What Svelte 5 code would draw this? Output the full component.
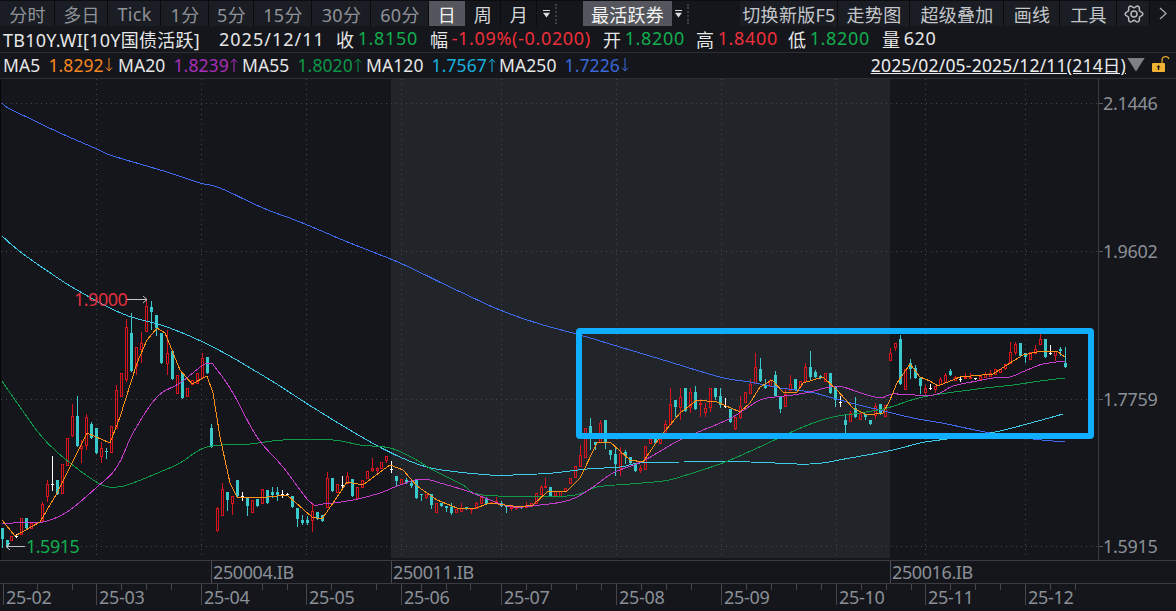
<script>
  const leftTabs = [['分时',55],['多日',53],['Tick',53],['1分',48],['5分',45],['15分',58],['30分',59],['60分',58]];
  const rightTabs = [['切换新版F5',98],['走势图',72],['超级叠加',94],['画线',56],['工具',57]];

  const info = [
    [['TB10Y.WI[10Y国债活跃]','t tight']],
    [['2025/12/11','t wide']],
    [['收','t'],['1.8150','g']],
    [['幅','t'],['-1.09%(-0.0200)','r']],
    [['开','t'],['1.8200','g']],
    [['高','t'],['1.8400','r']],
    [['低','t'],['1.8200','g']],
    [['量','t'],['620','t']]
  ];
  const mas = [
    ['MA5','1.8292',false,'orange'],['MA20','1.8239',true,'purple'],['MA55','1.8020',true,'green'],
    ['MA120','1.7567',true,'cyan'],['MA250','1.7226',false,'blue']
  ];

  const seg3 = [
    ['c',7,715,748,715,770],['c',20,750,770],['r',33,738,750],['w',48,737,733,741],['r',63,685,733],['c',78,685,715],['r',93,700,715],['r',108,695,700],
    ['r',125,642,690,635,695],['r',140,583,617,570,635],['w',155,583,498,600],['c',170,570,612],['r',185,522,610],['r',200,445,525],
    ['r',215,378,436,342,440],['c',230,378,468,318,468],['r',244,468,475,450,520],['r',259,380,465,372,480],['c',274,402,445,395,445],
    ['c',289,415,488],['r',304,475,497,455,520],['c',319,483,487,475,503],['r',334,408,485],['r',349,300,415,285,415],['r',364,250,318],
    ['r',379,112,268,88,275],['c',394,130,243,70,243],['r',409,172,228,172,255],['r',424,160,178,125,218],['r',439,47,122,30,122],
    ['c',454,50,65,33,118],['c',469,75,115,75,135],['c',484,130,218],['r',500,188,218,120,255],['c',515,183,267],['r',530,255,310],
    ['c',545,248,323],['r',560,295,318,295,322],['r',575,270,283],['r',590,250,280],['r',605,205,260,190,260],['c',620,200,250],
    ['c',634,415,472,402,472],['r',650,655,720,652,725],['r',665,598,675,580,675],['c',680,605,630,605,660],['r',695,618,640,618,675],
    ['c',710,570,618],['w',725,618,607,630],['c',740,620,648,620,675],['r',755,630,665],['c',770,628,648],['r',785,597,640],['c',800,600,640],
    ['c',815,605,615,592,620],['c',830,605,615,592,630],['w',845,612,600,622],['w',860,612,610,614],['c',875,618,652],['c',890,655,687,655,707],
    ['c',905,690,700,675,702],['c',920,690,700,678,702],['r',935,663,690,640,725],['c',950,665,688],['c',965,675,692],['r',980,565,650,545,650],
    ['c',995,563,603],['r',1010,583,605],['w',1025,585,558,592],['r',1040,558,580,545,580],['c',1055,568,618],['r',1070,592,625],['r',1085,570,592],
    ['r',1100,542,565],['r',1115,535,540,505,545],['r',1130,535,540,530,552]
  ];
  const seg4 = [
    ['r',4,187,205],['r',19,167,180,167,190],['w',34,208,183,215],['c',49,228,242,228,258],['r',64,237,252],['c',79,240,250,235,250],['c',94,250,258,240,262],
    ['c',109,240,293],['c',124,282,285,282,300],['r',139,282,292,282,298],['c',154,283,315,283,325],['r',169,310,335],['c',184,310,318],
    ['c',199,318,325,318,333],['c',214,322,340,308,342],['r',229,328,335],['r',244,323,333,310,333],['c',259,320,328],['r',274,325,328,325,342],
    ['r',289,310,323,305,323],['r',304,290,310,285,310],['c',319,295,313,290,313],['r',334,305,308],['r',349,302,308,292,308],['c',364,308,318,302,318],
    ['c',379,318,322,318,335],['r',394,320,325,320,333],['r',409,320,325,320,330],['c',424,318,325],['r',439,315,320,305,320],['r',454,310,318],
    ['r',469,278,310],['r',484,262,282,255,282],['r',496,258,262,235,262],['c',511,262,288],['r',526,272,285],['r',541,272,288],['r',556,265,272],
    ['r',571,235,250],['r',586,198,232],['r',601,165,198,135,198],['r',616,85,170],['c',631,78,110,55,148],['c',646,125,135,125,148],
    ['r',661,68,125,60,125],['c',676,60,130,60,145],['c',691,150,165,150,178],['c',706,162,192,145,225],['r',721,158,205,140,228],
    ['c',736,155,168,150,188],['c',751,170,190],['c',766,193,213],['r',781,203,210,195,218],['r',796,138,208],['r',811,118,130],['c',826,118,130,98,130],['r',841,118,130]
  ];
  const seg5 = [
    ['r',16,313,345,300,345],['r',31,252,312,205,312],['c',46,240,262,240,288],['r',61,230,262,205,300],['c',76,205,272],['r',91,217,262,205,278],
    ['c',106,215,268,197,268],['r',121,250,252,238,292],['r',136,264,275,250,290],['r',151,205,262,205,275],['c',166,205,230,205,238],
    ['c',181,228,255,205,262],['w',196,258,235,262],['c',211,268,305],['r',226,290,325,290,330],['r',241,258,292,228,298],['r',256,217,245],
    ['r',271,192,220,178,222],['r',286,142,190,98,190],['c',301,147,183,115,183],['c',316,195,203,178,203],['r',331,180,198,178,198],
    ['c',346,165,228,153,228],['c',361,228,268,228,275],['r',376,222,257,205,257],['r',391,193,210,165,210],['c',406,178,210],['r',421,183,197,183,205],
    ['r',436,142,182,128,182],['c',451,140,172,93,178],['c',466,155,170,150,170],['c',481,168,175,165,175],['r',496,160,182],['c',511,158,220],
    ['c',526,202,240,202,258],['w',541,245,228,258],['c',556,300,315,285,335],['r',571,278,303,272,303],['c',586,265,292,232,292],['r',601,280,297,272,297],
    ['c',616,282,290,282,297],['c',631,300,312],['r',646,258,285,250,297],['c',661,252,283],['r',676,255,288,255,292]
  ];
  const seg6 = [
    ['r',31,98,120,85,120],['r',46,70,80,70,92],['c',61,58,192,45,192],['r',76,148,208],['c',91,130,147,118,175],['c',106,145,175,135,175],
    ['c',121,173,197,173,218],['r',136,205,215,195,222],['w',151,204,193,208],['r',166,198,208,198,220],['r',181,177,192,170,192],['r',196,165,185,160,185],
    ['c',211,152,165,148,165],['r',226,170,180,167,180],['w',241,178,172,182],['r',256,170,175,160,175],['r',271,170,172,160,172],['w',286,175,174,176],
    ['r',301,167,178],['r',316,163,170,156,170],['r',331,158,168,150,168],['r',346,148,162],['r',361,148,155],['r',376,133,143,133,150],
    ['r',391,97,130,65,130],['r',406,72,97,65,105],['c',421,70,108],['c',436,100,112,100,125],['r',451,97,118],['r',466,87,100,75,100],
    ['r',481,58,72,42,75],['c',496,58,110],['w',511,100,75,103],['r',526,92,105,92,122],['c',541,87,94,82,105],['c',556,130,140,82,140]
  ];

  function mapSeg(list, ox, oy) {
    return list.map(([t, z, a, b, c, d]) => {
      const x = Math.round(ox + z / 3);
      if (t === 'w') return { t, x, cy: Math.round(oy + a / 3), top: Math.round(oy + b / 3), bot: Math.round(oy + c / 3) };
      const top = Math.round(oy + a / 3);
      const bot = Math.round(oy + b / 3);
      return {
        t, x, top, h: Math.max(bot - top, 1),
        wt: Math.round(oy + (c ?? a) / 3),
        wb: Math.round(oy + (d ?? b) / 3)
      };
    });
  }
  const candles = [
    ...mapSeg(seg3, 0, 290), ...mapSeg(seg4, 380, 400), ...mapSeg(seg5, 660, 320), ...mapSeg(seg6, 880, 320)
  ];

  // Catmull-Rom resampling so the moving averages curve like the source data
  function smooth(str) {
    const p = str.split(' ').map((s) => s.split(',').map(Number));
    const out = [];
    for (let i = 0; i < p.length - 1; i++) {
      const a = p[Math.max(i - 1, 0)], b = p[i], c = p[i + 1], d = p[Math.min(i + 2, p.length - 1)];
      const n = Math.max(2, Math.ceil((c[0] - b[0]) / 5));
      for (let j = 0; j < n; j++) {
        const t = j / n, t2 = t * t, t3 = t2 * t;
        const f = (k) => 0.5 * (2 * b[k] + (c[k] - a[k]) * t + (2 * a[k] - 5 * b[k] + 4 * c[k] - d[k]) * t2 + (3 * b[k] - a[k] - 3 * c[k] + d[k]) * t3);
        out.push(`${f(0).toFixed(1)},${f(1).toFixed(1)}`);
      }
    }
    const last = p[p.length - 1];
    out.push(`${last[0]},${last[1]}`);
    return out.join(' ');
  }

  const lines = {
    blue: smooth('2,103 8,108 33,120 60,133 97,149 113,156 167,172 200,183 220,188 263,208 300,222 350,243 400,263 450,287 500,310 540,324 580,335 620,347 660,359 720,377 750,382 780,388 810,392 840,400 867,407 880,410 913,418 947,424 990,433 1033,439 1065,442'),
    cyan: smooth('2,236 18,250 43,268 77,290 123,314 167,327 213,347 267,378 317,410 367,440 400,457 427,467 450,471 490,475 513,475 553,473 587,469 620,467 640,463 680,462 750,462 810,464 850,458 893,450 920,443 947,439 990,433 1027,424 1063,414'),
    green: smooth('2,381 20,407 43,438 70,463 100,484 117,487 133,483 160,472 180,463 207,447 250,444 283,440 333,440 360,445 390,448 413,458 433,470 463,485 483,495 567,496 597,487 630,484 663,481 680,477 720,464 753,450 803,427 833,417 860,413 887,408 923,397 977,389 1013,385 1040,381 1065,378'),
    purple: smooth('2,524 27,522 43,522 67,512 97,487 117,467 133,433 157,397 180,383 207,363 217,370 233,393 257,437 283,467 310,502 323,504 353,500 380,493 400,485 422,479 447,485 470,492 490,500 513,507 540,505 570,500 593,487 613,473 643,461 680,440 727,420 747,408 763,399 793,395 810,392 830,387 843,387 867,395 883,398 892,394 933,395 953,386 977,381 993,378 1010,377 1027,370 1043,364 1065,361'),
    orange: '2,520 15,536 40,522 57,493 80,447 87,433 110,443 120,417 137,363 147,340 157,328 165,333 180,370 192,384 207,376 213,393 220,437 230,483 237,497 257,498 287,495 312,517 322,519 333,503 347,482 363,485 380,472 390,465 403,470 417,486 437,500 457,508 473,509 490,503 520,507 533,505 547,492 567,491 580,478 597,443 610,442 630,460 643,462 660,437 680,413 697,400 717,402 740,412 750,403 760,387 772,380 783,392 797,392 803,383 823,377 837,390 853,408 867,415 883,413 890,400 897,383 910,364 920,377 930,381 938,386 960,377 993,374 1010,363 1023,355 1037,352 1057,351 1065,357'
  };

  const majors = [3, 96, 201, 306, 401, 501, 616, 721, 836, 925, 1025];
  const verticals = majors.slice(1);
  const axisLabels = ['25-02','25-03','25-04','25-05','25-06','25-07','25-08','25-09','25-10','25-11','25-12'];
  const minors = [37, 72, 121, 146, 171, 217, 262, 287, 331, 376, 421, 446, 470, 526, 551, 576, 601, 641, 666, 691, 746, 771, 796, 821, 861, 886, 911, 950, 975, 1000, 1050, 1075];
  const priceRows = [[103, '2.1446'], [251, '1.9602'], [399, '1.7759'], [546, '1.5915']];
  const contracts = [[211, '250004.IB'], [391, '250011.IB'], [890, '250016.IB']];

  // six-lobed cog outline for the settings button
  const cog = (() => {
    const pts = [];
    for (let i = 0; i < 72; i++) {
      const a = (i / 72) * Math.PI * 2;
      const r = 7.6 + 1.25 * Math.cos(6 * a);
      pts.push(`${(10 + r * Math.cos(a)).toFixed(2)} ${(10 + r * Math.sin(a)).toFixed(2)}`);
    }
    return `M${pts.join('L')}Z`;
  })();
</script>

<div class="page">
  <div class="toolbar">
    {#each leftTabs as [label, w]}
      <div class="tab" style:width="{w}px">{label}</div>
    {/each}
    <div class="tab active narrow">日</div>
    <div class="tab bright narrow">周</div>
    <div class="tab bright narrow">月</div>
    <div class="menu-arrow"><span class="mini-tri"></span><span class="dots"></span></div>
    <div class="tab active issue">最活跃券</div>
    <div class="menu-arrow second"><span class="mini-tri"></span><span class="dots"></span></div>
    <div class="spacer"></div>
    {#each rightTabs as [label, w]}
      <div class="tab soft" style:width="{w}px">{label}</div>
    {/each}
    <div class="tab soft icon-tab">
      <svg width="20" height="20" viewBox="0 0 20 20" fill="none" stroke="#b4b7bc" stroke-width="1.5">
        <path d={cog}/>
        <circle cx="10" cy="10" r="3"/>
      </svg>
    </div>
    <div class="tab soft chevron-tab">
      <svg width="8" height="13" viewBox="0 0 8 13" fill="none" stroke="#a8abb0" stroke-width="1.3"><path d="M1 1l6 5.5-6 5.5"/></svg>
    </div>
  </div>

  <div class="info-row">
    {#each info as group}
      <div class="group">
        {#each group as [text, tone]}
          <span class={tone}>{text}</span>
        {/each}
      </div>
    {/each}
  </div>

  <div class="ma-row">
    <div class="ma-list">
      {#each mas as [name, value, up, tone]}
        <div class="ma">
          <span class="t">{name}</span>
          <span class="val {tone}">{value}<svg class="ar" width="8" height="14" viewBox="0 0 8 14" fill="none" stroke="currentColor" stroke-width="1">
            {#if up}<path d="M4 14V1M1 4.5L4 1l3 3.5"/>{:else}<path d="M4 0v13M1 9.5L4 13l3-3.5"/>{/if}
          </svg></span>
        </div>
      {/each}
    </div>
    <span class="range">2025/02/05-2025/12/11(214日)</span>
    <span class="tri"></span>
    <svg class="lock" width="20" height="18" viewBox="0 0 20 18">
      <path d="M11 8.5V5a3.6 3.6 0 0 1 7-1" fill="none" stroke="#e0a22a" stroke-width="1.3"/>
      <rect x="1" y="8" width="13" height="9" rx="1" fill="#f0b232"/>
      <path d="M7.5 10l2 2.2H8.2V15H6.8v-2.8H5.5z" fill="#15171c"/>
    </svg>
  </div>

  <svg class="chart" width="1176" height="481" viewBox="0 79 1176 481">
    <rect x="391" y="79" width="499" height="479" class="band"/>
    <rect x="0" y="79" width="1" height="481" class="edge"/>
    {#each priceRows as [y]}
      <line x1="1" x2="1098" y1={y + 0.5} y2={y + 0.5} class="grid"/>
      <line x1="1098" x2="1103" y1={y + 0.5} y2={y + 0.5} class="axis-tick"/>
    {/each}
    {#each verticals as x}
      <line x1={x + 0.5} x2={x + 0.5} y1="79" y2="558" class="grid"/>
    {/each}
    <line x1="1098.5" x2="1098.5" y1="79" y2="560" class="axis-line"/>

    {#each candles as k}
      {#if k.t === 'w'}
        <rect x={k.x} y={k.top} width="1" height={k.bot - k.top + 1} class="white"/>
        <rect x={k.x - 1} y={k.cy} width="3" height="1" class="white"/>
      {:else if k.t === 'c'}
        <rect x={k.x} y={k.wt} width="1" height={k.wb - k.wt + 1} class="cy"/>
        <rect x={k.x - 1} y={k.top} width="3" height={k.h} class="cy"/>
      {:else}
        <rect x={k.x} y={k.wt} width="1" height={k.top - k.wt} class="rd"/>
        <rect x={k.x} y={k.top + k.h} width="1" height={k.wb - k.top - k.h} class="rd"/>
        <rect x={k.x - 0.5} y={k.top + 0.5} width="2" height={k.h} class="hollow"/>
      {/if}
    {/each}

    <polyline points={lines.blue} class="ln blue-l"/>
    <polyline points={lines.cyan} class="ln cyan-l"/>
    <polyline points={lines.green} class="ln green-l"/>
    <polyline points={lines.purple} class="ln purple-l"/>
    <polyline points={lines.orange} class="ln orange-l"/>

    <rect x="579" y="331" width="512" height="105" rx="1" class="focus"/>

    <text x="74" y="306" class="mark r-f">1.9000</text>
    <path d="M127 299.5h20M143 296l4 3.5-4 3.5" class="arrow"/>
    <text x="26" y="553" class="mark g-f">1.5915</text>
    <path d="M25 546.5H6M10 543l-4 3.5 4 3.5" class="arrow"/>

    {#each priceRows as [y, label]}
      <text x="1103" y={y + 7} class="price">{label}</text>
    {/each}
  </svg>

  <div class="contract-row">
    {#each contracts as [x, label]}
      <span class="contract" style:left="{x}px">{label}</span>
    {/each}
  </div>

  <div class="date-row">
    {#each minors as x}
      <i class="minor" style:left="{x}px"></i>
    {/each}
    {#each majors as x, i}
      <i class="major" style:left="{x}px"></i>
      <span class="date" style:left="{x + 3}px">{axisLabels[i]}</span>
    {/each}
  </div>
</div>

<style>
  :global(body) { margin: 0; background: #14161c; }
  .page {
    width: 1176px; height: 611px; overflow: hidden; background: #14161c;
    display: flex; flex-direction: column;
    font-family: "Noto Sans", "Noto Sans CJK SC", sans-serif;
    font-size: 18px; color: #e6e6e6;
  }
  .toolbar { height: 25px; display: flex; background: #0c0d10; padding-top: 1px; flex: none; }
  .tab {
    height: 25px; display: flex; align-items: center; justify-content: center;
    background: #1a1d23; color: #8f9298; flex: none; box-shadow: inset -1px 0 0 #0a0b0d;
    white-space: nowrap; letter-spacing: .3px;
  }
  .tab.narrow { width: 36px; }
  .tab.active { background: #55565d; color: #f2f2f2; box-shadow: none; }
  .tab.bright { color: #d5d6d8; background: #14161c; }
  .tab.issue { width: 89px; }
  .tab.soft { color: #c4c6ca; }
  .icon-tab { width: 33px; }
  .chevron-tab { width: 26px; box-shadow: none; background: #14161c; }
  .menu-arrow {
    width: 46px; display: flex; align-items: center; padding-left: 6px; gap: 5px; box-sizing: border-box;
    background: #14161c; flex: none;
  }
  .menu-arrow.second { width: 40px; padding-left: 3px; }
  .mini-tri { width: 7px; height: 8px; background: #dcdcdc; clip-path: polygon(0 0, 100% 0, 100% 18%, 0 18%, 0 40%, 100% 40%, 50% 100%, 0 40%); }
  .dots { width: 0; height: 20px; border-left: 2px dotted #3c3e44; }
  .spacer { flex: 1; background: #14161c; }

  .info-row {
    height: 27px; flex: none; display: grid; align-items: center; padding-left: 3px;
    grid-template-columns: 216px 117px 94px 173px 93px 92px 94px auto;
    border-bottom: 1px solid #2c2e33; box-sizing: border-box; letter-spacing: .65px; white-space: nowrap;
  }
  .group { display: flex; gap: 3px; }
  .tight { letter-spacing: .25px; }
  .wide { letter-spacing: 1px; }
  .ma-row {
    height: 26px; flex: none; display: flex; align-items: center; padding: 0 6px 2px 3px;
    border-bottom: 1px solid #2c2e33; box-sizing: border-box; font-size: 17.5px; letter-spacing: .1px; white-space: nowrap;
  }
  .ma-list { flex: 1; display: grid; grid-template-columns: 115px 124px 124px 133px auto; }
  .ma { display: flex; gap: 8px; }
  .val { display: flex; align-items: center; }
  .ar { flex: none; margin-left: 1px; }
  .t { color: #e6e6e6; }
  .g { color: #12ad4e; }
  .r { color: #ee2f3a; }
  .orange { color: #f5871f; }
  .purple { color: #a92eb8; }
  .green { color: #0e9548; }
  .cyan { color: #18b0dc; }
  .blue { color: #3a68d8; }
  .range { color: #ececec; text-decoration: underline; letter-spacing: .2px; font-size: 17.5px; }
  .tri { width: 18px; height: 14px; background: #7e8084; clip-path: polygon(0 0, 100% 0, 50% 100%); margin-left: 1px; }
  .lock { margin-left: 6px; margin-right: -1px; margin-top: -2px; }

  .chart { display: block; flex: none; }
  .band { fill: #212428; }
  .edge { fill: #050505; }
  .grid { stroke: #44474d; stroke-width: 1; stroke-dasharray: 1 4; }
  .axis-line { stroke: #3a3c42; stroke-width: 1; }
  .axis-tick { stroke: #5a5c62; stroke-width: 1; }
  .cy { fill: #3cc9cc; }
  .rd { fill: #d8141c; }
  .white { fill: #ffffff; }
  .hollow { fill: none; stroke: #d8141c; stroke-width: 1; }
  .ln { fill: none; stroke-width: 1; shape-rendering: crispEdges; }
  .blue-l { stroke: #3f6cf2; }
  .cyan-l { stroke: #3fcbe6; }
  .green-l { stroke: #0f9a4a; }
  .purple-l { stroke: #c33fc9; }
  .orange-l { stroke: #ff9018; }
  .focus { fill: none; stroke: #10aeff; stroke-width: 6; }
  .mark { font-size: 18px; letter-spacing: -.5px; }
  .r-f { fill: #e02f3d; }
  .g-f { fill: #12ad4e; }
  .arrow { fill: none; stroke: #c4c4c4; stroke-width: 1; }
  .price { font-size: 18px; fill: #8b8f96; letter-spacing: -.3px; }

  .contract-row {
    position: relative; height: 24px; flex: none; box-sizing: border-box;
    border-top: 1px solid #3a3c42; border-bottom: 1px solid #3a3c42; color: #8b8f96;
    letter-spacing: -.4px;
  }
  .contract {
    position: absolute; top: 0; height: 22px; line-height: 22px; padding-left: 1px;
    border-left: 1px solid #4a4c52;
  }
  .date-row { position: relative; flex: 1; color: #8b8f96; letter-spacing: -.3px; }
  .major { position: absolute; top: 0; width: 1px; height: 21px; background: #44464c; }
  .minor { position: absolute; top: 0; width: 1px; height: 6px; background: #44464c; }
  .date { position: absolute; top: 0; line-height: 26px; }
</style>
